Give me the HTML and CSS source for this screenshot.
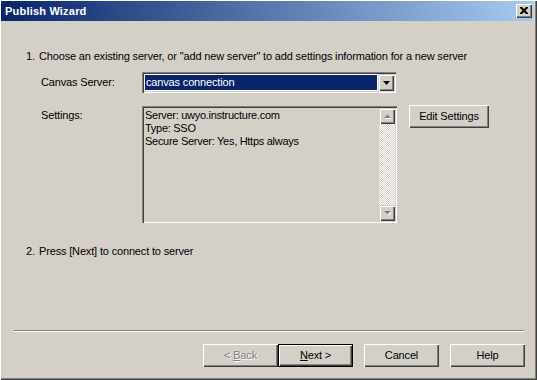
FILE: index.html
```html
<!DOCTYPE html>
<html>
<head>
<meta charset="utf-8">
<title>Publish Wizard</title>
<link rel="stylesheet" href="styles.css">
</head>
<body>
<div class="window">
  <div class="titlebar">
    <span class="title">Publish Wizard</span>
    <button class="close" aria-label="Close">
      <svg width="8" height="7" viewBox="0 0 8 7"><path d="M0 0h2l2 2 2-2h2v1l-2.5 2.5L8 6v1H6L4 5 2 7H0V6l2.5-2.5L0 1z" fill="#000"/></svg>
    </button>
  </div>
  <div class="client">
    <div class="step step1"><span class="num">1.</span><span>Choose an existing server, or "add new server" to add settings information for a new server</span></div>
    <div class="row row-combo">
      <span class="label">Canvas Server:</span>
      <div class="combo">
        <div class="combo-value">canvas connection</div>
        <div class="sbtn combo-btn">
          <svg width="7" height="4" viewBox="0 0 7 4"><path d="M0 0h7L3.5 4z" fill="#000"/></svg>
        </div>
      </div>
    </div>
    <div class="row row-settings">
      <span class="label">Settings:</span>
      <div class="textbox">
        <div class="textbox-text">Server: uwyo.instructure.com<br>Type: SSO<br>Secure Server: Yes, Https always</div>
        <div class="vscroll">
          <div class="sbtn arrow-btn">
            <svg width="7" height="5" viewBox="0 0 7 5"><path d="M1 5h7L4.5 1.5z" fill="#fff"/><path d="M0 4h7L3.5 0.5z" fill="#808080"/></svg>
          </div>
          <div class="track"></div>
          <div class="sbtn arrow-btn">
            <svg width="7" height="5" viewBox="0 0 7 5"><path d="M1 1h7L4.5 4.5z" fill="#fff"/><path d="M0 0h7L3.5 3.5z" fill="#808080"/></svg>
          </div>
        </div>
      </div>
      <button class="btn edit-btn">Edit Settings</button>
    </div>
    <div class="step step2"><span class="num">2.</span><span>Press [Next] to connect to server</span></div>
    <div class="separator"></div>
    <div class="buttons">
      <div class="pair">
        <button class="btn disabled">&lt; <u>B</u>ack</button>
        <button class="btn default"><span class="inner"><u>N</u>ext &gt;</span></button>
      </div>
      <button class="btn">Cancel</button>
      <button class="btn">Help</button>
    </div>
  </div>
</div>
</body>
</html>
```
FILE: styles.css
```css
html, body {
  margin: 0;
  padding: 0;
  background: #d4d0c8;
}
body {
  font-family: "Liberation Sans", Arial, sans-serif;
  font-size: 11px;
  letter-spacing: -0.16px;
  color: #000;
}
.window {
  width: 537px;
  height: 380px;
  box-sizing: border-box;
  background: #d4d0c8;
  padding: 1px 4px 3px 1px;
  box-shadow: inset 1px 1px #fff, inset -1px -1px #404040, inset -2px -2px #808080;
  display: flex;
  flex-direction: column;
}
.titlebar {
  height: 20px;
  flex: none;
  background: linear-gradient(to right, #0a246a, #a6caf0);
  display: flex;
  align-items: flex-start;
  justify-content: space-between;
}
.title {
  color: #fff;
  font-weight: bold;
  font-size: 11px;
  line-height: 13px;
  margin: 4px 0 0 4px;
  letter-spacing: 0.2px;
}
.close {
  width: 16px;
  height: 14px;
  margin: 3px 1px 0 0;
  padding: 0;
  border: none;
  background: #d4d0c8;
  box-shadow: inset 1px 1px #fff, inset -1px -1px #404040, inset -2px -2px #808080;
  display: flex;
  align-items: center;
  justify-content: center;
}
.close svg { display: block; margin: -1px 0 0 -1px; }
.client {
  flex: 1;
  display: flex;
  flex-direction: column;
}
.step {
  line-height: 13px;
  padding-left: 25px;
  display: flex;
}
.step .num { width: 13px; }
.step1 { margin-top: 29px; }
.step2 { margin-top: 22px; }
.row {
  display: flex;
  padding-left: 40px;
}
.label {
  width: 101px;
  line-height: 13px;
}
.row-combo {
  margin-top: 9px;
  align-items: center;
}
.combo {
  width: 254px;
  height: 21px;
  box-sizing: border-box;
  background: #fff;
  box-shadow: inset 1px 1px #808080, inset 2px 2px #404040, inset -1px -1px #fff, inset -2px -2px #d4d0c8;
  padding: 2px;
  display: flex;
}
.combo-value {
  flex: 1;
  margin: 1px;
  background: #0a246a;
  color: #fff;
  line-height: 15px;
  padding-left: 1px;
}
.sbtn {
  width: 16px;
  box-sizing: border-box;
  background: #d4d0c8;
  box-shadow: inset 1px 1px #d4d0c8, inset 2px 2px #fff, inset -1px -1px #404040, inset -2px -2px #808080;
  display: flex;
  align-items: center;
  justify-content: center;
}
.combo-btn { height: 17px; }
.row-settings {
  margin-top: 13px;
  align-items: flex-start;
}
.row-settings .label { padding-top: 3px; }
.textbox {
  width: 255px;
  height: 117px;
  box-sizing: border-box;
  padding: 2px;
  box-shadow: inset 1px 1px #808080, inset 2px 2px #404040, inset -1px -1px #fff, inset -2px -2px #d4d0c8;
  display: flex;
}
.textbox-text {
  flex: 1;
  line-height: 13px;
  padding: 1px 0 0 1px;
  letter-spacing: -0.28px;
}
.vscroll {
  width: 16px;
  display: flex;
  flex-direction: column;
}
.arrow-btn { height: 16px; flex: none; }
.track {
  flex: 1;
  background: repeating-conic-gradient(#fff 0 25%, #d4d0c8 0 50%) 0 0 / 2px 2px;
}
.btn {
  font: inherit;
  letter-spacing: inherit;
  color: #000;
  width: 75px;
  height: 23px;
  padding: 0;
  border: none;
  background: #d4d0c8;
  box-shadow: inset 1px 1px #fff, inset -1px -1px #404040, inset -2px -2px #808080;
  line-height: 13px;
  text-align: center;
}
.edit-btn {
  width: 80px;
  margin: -1px 0 0 12px;
}
.separator {
  margin: 72px 9px 0 13px;
  border-top: 1px solid #808080;
  border-bottom: 1px solid #fff;
  height: 0;
}
.buttons {
  margin-top: 12px;
  display: flex;
  justify-content: flex-end;
  gap: 11px;
  padding-right: 8px;
}
.pair { display: flex; }
.btn.disabled {
  color: #808080;
  text-shadow: 1px 1px #fff;
}
.btn.default {
  box-shadow: inset 0 0 0 1px #000;
  padding: 1px;
}
.btn.default .inner {
  display: flex;
  align-items: center;
  justify-content: center;
  width: 100%;
  height: 100%;
  box-sizing: border-box;
  box-shadow: inset 1px 1px #fff, inset -1px -1px #404040, inset -2px -2px #808080;
}
u { text-decoration: underline; text-underline-offset: 1px; }
```
